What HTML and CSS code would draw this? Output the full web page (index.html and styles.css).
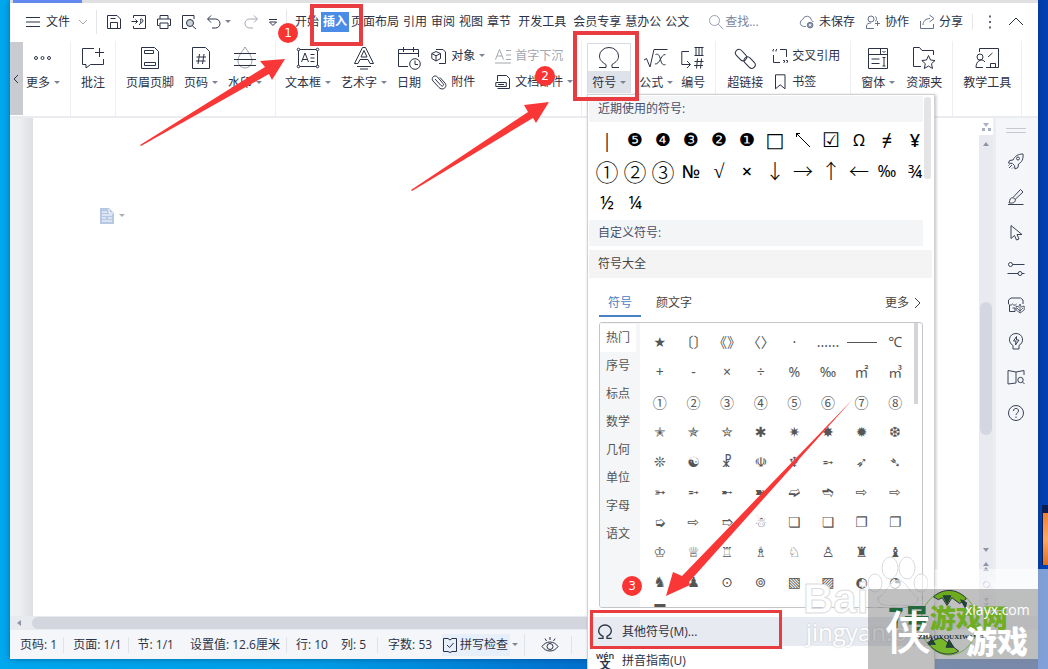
FILE: index.html
```html
<!DOCTYPE html>
<html lang="zh-CN">
<head>
<meta charset="utf-8">
<title>文档 - 插入符号</title>
<link rel="stylesheet" href="styles.css">
</head>
<body>
<svg class="defs" aria-hidden="true">
  <symbol id="i-menu" viewBox="0 0 16 16"><path d="M1 3.5h14M1 8h14M1 12.5h14"/></symbol>
  <symbol id="i-down" viewBox="0 0 10 16"><path d="M1 6l4 4 4-4"/></symbol>
  <symbol id="i-save" viewBox="0 0 16 16"><path d="M1.5 1.500h9.500l3.500 3.500v9.500h-13zM4.500 14.500V8.500h7v6M4.500 4.500h5"/></symbol>
  <symbol id="i-export" viewBox="0 0 16 16"><path d="M2.500 4V1.500h12v13h-12V12M.5 7.500h6M4.500 5.500l2 2-2 2M8 11c2-1 2-4 1.500-6 3-.5 3.500 3.500 0 4"/></symbol>
  <symbol id="i-print" viewBox="0 0 16 16"><path d="M4 5V1.500h8V5M3.500 11.500h-2v-6.500h13v6.500h-2M4 9h8v5.500H4z"/></symbol>
  <symbol id="i-preview" viewBox="0 0 16 16"><path d="M6 14.500H1.500v-13h11.500V5M11.500 12l3.500 3"/><circle cx="9" cy="9" r="3.500" fill="#cbd0da"/></symbol>
  <symbol id="i-undo" viewBox="0 0 16 16"><path d="M5 1.500L1.500 5 5 8.500M2 5h7.500a4.500 4.500 0 0 1 0 9H6"/></symbol>
  <symbol id="i-redo" viewBox="0 0 16 16"><path d="M11 1.500L14.500 5 11 8.500M14 5H6.500a4.500 4.500 0 0 0 0 9H10"/></symbol>
  <symbol id="i-qmore" viewBox="0 0 10 16"><path d="M1 5.500h8M1.500 8h7L5 11.500z"/></symbol>
  <symbol id="i-search" viewBox="0 0 16 16"><circle cx="6.500" cy="6.500" r="5"/><path d="M10.200 10.200l5 4.800"/></symbol>
  <symbol id="i-cloud" viewBox="0 0 18 16"><path d="M8 13H5a4 4 0 0 1-.8-7.800A5 5 0 0 1 14 6a4 4 0 0 1 2 2"/><circle cx="12.500" cy="11.500" r="3.200" fill="#8490a8"/><path d="M11.200 10.200l2.600 2.600M13.800 10.200l-2.600 2.600" stroke="#fff"/></symbol>
  <symbol id="i-people" viewBox="0 0 16 16"><circle cx="6" cy="5" r="3"/><path d="M9 14.500H1.500V12c0-2 2-3 4.500-3M12.500 7v5M10 9.500h5M10 2.500c2 .5 2 4 0 5"/></symbol>
  <symbol id="i-share" viewBox="0 0 16 16"><path d="M1.500 7v7.500h13V10M4 11c0-4 3-6.500 7-6.500M10.500 1l4.500 3.500-4.500 3.500"/></symbol>
  <symbol id="i-dots" viewBox="0 0 6 16"><path d="M3 1.500v2M3 7v2M3 12.500v2" stroke-width="1.500"/></symbol>
  <symbol id="i-up" viewBox="0 0 16 16"><path d="M1 11l7-7 7 7"/></symbol>

  <symbol id="i-more" viewBox="0 0 24 24"><circle cx="5" cy="12" r="1.500"/><circle cx="11.500" cy="12" r="1.500"/><circle cx="18" cy="12" r="1.500"/></symbol>
  <symbol id="i-comment" viewBox="0 0 24 24"><path d="M13 2.500H1.500v16H5V22l4.500-3.500h13V13M18.500 2v9M14 6.500h9"/></symbol>
  <symbol id="i-header" viewBox="0 0 24 24"><path d="M3.500 1.500h13l4 4v17h-17zM6.500 4.500h9v3h-9zM6.500 16.500h11v3h-11z"/></symbol>
  <symbol id="i-pageno" viewBox="0 0 24 24"><path d="M3.500 1.500h13l4 4v17h-17zM10.500 8l-1.500 10M15 8l-1.500 10M7.500 11h9.500M7 15h9.500"/></symbol>
  <symbol id="i-mark" viewBox="0 0 24 24"><path d="M12 1C9 6 5 10 5 15a7 7 0 0 0 14 0C19 10 15 6 12 1z" stroke="#999da8"/><path d="M1 7.500h22M1 13.500h22M1 19.500h22"/></symbol>
  <symbol id="i-textbox" viewBox="0 0 24 24"><path d="M2.500 3.500h19v17h-19zM5.500 16l3.500-9 3.500 9M6.500 13.500h5M14.500 8.500h4M14.500 12h4M14.500 15.500h4"/><g fill="#fff"><circle cx="2.500" cy="3.500" r="1.300"/><circle cx="21.500" cy="3.500" r="1.300"/><circle cx="2.500" cy="20.500" r="1.300"/><circle cx="21.500" cy="20.500" r="1.300"/></g></symbol>
  <symbol id="i-wordart" viewBox="0 0 24 24"><path d="M2.500 17.500L10.500 1.500h3l8 16h-3.500l-2-4H8l-2 4zM9 11h6l-3-6.500zM5 20.500h14M8 23h8"/></symbol>
  <symbol id="i-date" viewBox="0 0 24 24"><path d="M11 20.500H1.500v-17h20V11M1.500 7.500h20M6.500 1v5M16.500 1v5"/><circle cx="18" cy="18" r="5.300"/><path d="M18 14.500V18.500h3"/></symbol>
  <symbol id="i-object" viewBox="0 0 16 16"><path d="M5 1.500h7l2.500 2.500v11.500H8M5 3.500l4.500 2v5L5 13 .8 10.500v-5zM.8 5.500L5 7.800l4.500-2.300M5 7.800V13"/></symbol>
  <symbol id="i-clip" viewBox="0 0 16 16"><path d="M4 5l6 6.500c1.500 1.500 3.500-.5 2-2L6.500 3C3.500 0-.5 4 2 7l6 6.500c4 4 9-1 6-4.500L9 3.500"/></symbol>
  <symbol id="i-drop" viewBox="0 0 16 16"><path d="M.5 11.500L4.500 1.500 8.500 11.500M2 8h5M11 2.500h5M11 7h5M11 11.500h5M0 15h16"/></symbol>
  <symbol id="i-parts" viewBox="0 0 16 16"><path d="M2.500 7V1.500h9l3 3v10h-12M.8 8.500h10.500v4H.8zM3 10.500h6"/></symbol>
  <symbol id="i-omega" viewBox="0 0 24 24"><path d="M2 21.500h7v-3C4.500 16 2.500 13.500 2.500 10a9.500 8.500 0 0 1 19 0c0 3.500-2 6-6.500 8.500v3h7"/></symbol>
  <symbol id="i-formula" viewBox="0 0 24 24"><path d="M0 14l2.500-1.500L6 21 10 3.500h13.500M11.500 8.500c3-1 4 1 5 5s2 6 5 5M21.500 8.500c-3 0-4 3-5.500 5.500s-2.500 4-5 4"/></symbol>
  <symbol id="i-number" viewBox="0 0 24 24"><path d="M8 5.500H.8v13H9M6 15l3.500 3.500L6 22M13.500 1.500h9M13.500 9.500h9M15 1.500v8M18 1.500v8M21 1.500v8M16.500 12.500l-1 10M20.500 12.500l-1 10M13.500 15.500h9M13 19.500h9"/></symbol>
  <symbol id="i-link" viewBox="0 0 24 24"><rect x="-5" y="-3.500" width="13" height="7" rx="3.500" transform="translate(7 8) rotate(47)"/><rect x="-7" y="-3.500" width="13" height="7" rx="3.500" transform="translate(17 17) rotate(47)"/></symbol>
  <symbol id="i-cross" viewBox="0 0 16 16"><path d="M1.500 7v7.500H8M8 1.500h6.500V9M1 3.500V2l1-1M4 3.500V2l1-1M11 12.500h1.500V14l-1 1M14 12.500h1.500V14l-1 1"/></symbol>
  <symbol id="i-book" viewBox="0 0 16 16"><path d="M3.500.8h9.500v14l-4.800-4-4.700 4z"/></symbol>
  <symbol id="i-form" viewBox="0 0 24 24"><path d="M2.500 2.500h19v20h-19zM2.500 8.500h19M14.500 2.500v6M5.500 13h8M5.500 17.500h8M16.500 11.500h3M16.500 20h3M18 11.500V20M16.500 5l1.500 1.500L19.500 5"/></symbol>
  <symbol id="i-folder" viewBox="0 0 24 24"><path d="M9 20.500H1.500v-19h6l2.500 3h11.500V9M16.500 9.500l2 4.500 4.500.5-3.500 3.200 1 4.800-4-2.500-4.200 2.500 1-4.800L9.800 14.500l4.700-.5z"/></symbol>
  <symbol id="i-teach" viewBox="0 0 24 24"><path d="M4.500 6V2.500h19v19H11M1 21.500c0-8 7-9 9-5.500M1 21.500h7M13 11l4.500-4M15.500 21v-3.500h5V21"/><circle cx="5" cy="11" r="3"/></symbol>

  <symbol id="i-rocket" viewBox="0 0 18 18"><path d="M16 2c-5 0-8 2-10 6L2.500 8.500 1.500 11l4 .5 2 2L8 17l3-1.500.5-3.500C15 10 16.500 7 16 2zM2 16l3-3M5 16.500l1-1M1.500 13.500l1-1"/><circle cx="11" cy="6.500" r="1.500"/></symbol>
  <symbol id="i-brush" viewBox="0 0 18 18"><path d="M1 16.500h15.500M2 15c1-1 0-4 2.500-5 3-1 5 2 3 4-1.500 1.500-4 1-5.500 1zM6 9.500l7.500-8 2.500 2.500-8 7.500"/></symbol>
  <symbol id="i-pointer" viewBox="0 0 18 18"><path d="M4 1.500v13l3.500-3 2 4.500 2.500-1-2-4.500h5z"/></symbol>
  <symbol id="i-sliders" viewBox="0 0 18 18"><circle cx="3.500" cy="4.500" r="2"/><path d="M5.500 4.500h12M.5 13.500h11M15 13.500h2.500"/><circle cx="13" cy="13.500" r="2"/></symbol>
  <symbol id="i-shop" viewBox="0 0 18 18"><path d="M8 15.500H2.500V9M4 2h9.500l2.500 2v4M4 2L1.500 4v4c1 1.500 3 1.500 4 0 1 1.500 3 1.500 4 0M5.500 12h2.500v3.500"/><path d="M13 8l1.200 3 3-1v4l-4 3-4-3v-4l2.500 1zM13 11v6M10 12l3 3 3-3" stroke-width=".8"/></symbol>
  <symbol id="i-bulb" viewBox="0 0 18 18"><path d="M6 13.500C0 10 2 1.500 9 1.500s9 8.500 3 12V17H6zM9.500 4.500L6.500 9H9l-.5 4L12 8H9.500z"/></symbol>
  <symbol id="i-read" viewBox="0 0 18 18"><path d="M9 15L1 16V2.500l8 1.500 8-1.500V7M9 4v11"/><circle cx="13.500" cy="12" r="2.700"/><path d="M15.500 14l2 2"/></symbol>
  <symbol id="i-help" viewBox="0 0 18 18"><circle cx="9" cy="9" r="7.500"/><path d="M6.500 7c0-3.500 5-3.500 5 0 0 2-2.500 2-2.500 4M9 12.500v1.500"/></symbol>
  <symbol id="i-doc" viewBox="0 0 14 16"><path d="M0 0h9l5 5v11H0z" fill="#b7c8e4" stroke="none"/><path d="M2 4h5M2 7h10M2 10h4M8 10h4M2 13h10M9 1v4h4" stroke="#fff"/></symbol>
  <symbol id="i-spell" viewBox="0 0 16 16"><path d="M8 3L6 1.500H1.500v13H6l2 1 2-1h4.500v-13H10zM5 8l2.500 2.500L11.500 6"/></symbol>
  <symbol id="i-eye" viewBox="0 0 18 18"><path d="M1 10.500c4-6 12-6 16 0-4 6-12 6-16 0zM9 1v3M4 2.500l1.500 2.500M14 2.500L12.500 5"/><circle cx="9" cy="10.500" r="3"/></symbol>
  <symbol id="i-right" viewBox="0 0 8 16"><path d="M1 3l5 5-5 5"/></symbol>
  <symbol id="i-diag" viewBox="0 0 16 16"><path d="M1 1l14 14M1.500 5V1.500H5"/></symbol>
</svg>

<main class="window">
  <div class="tabstrip"><span class="tabstrip-active"></span></div>

  <nav class="menubar" aria-label="菜单">
    <button class="btn file"><svg class="ic"><use href="#i-menu"/></svg>文件<svg class="ic ic-narrow muted"><use href="#i-down"/></svg></button>
    <div class="quick">
      <button class="btn" aria-label="保存"><svg class="ic"><use href="#i-save"/></svg></button>
      <button class="btn" aria-label="输出为PDF"><svg class="ic"><use href="#i-export"/></svg></button>
      <button class="btn" aria-label="打印"><svg class="ic"><use href="#i-print"/></svg></button>
      <button class="btn" aria-label="打印预览"><svg class="ic"><use href="#i-preview"/></svg></button>
      <button class="btn undo" aria-label="撤销"><svg class="ic"><use href="#i-undo"/></svg><i class="caret"></i></button>
      <button class="btn muted" aria-label="恢复"><svg class="ic"><use href="#i-redo"/></svg></button>
      <button class="btn" aria-label="自定义"><svg class="ic ic-narrow"><use href="#i-qmore"/></svg></button>
    </div>
    <div class="tabs">
      <button class="btn">开始</button>
      <button class="btn current">插入</button>
      <button class="btn">页面布局</button>
      <button class="btn">引用</button>
      <button class="btn">审阅</button>
      <button class="btn">视图</button>
      <button class="btn">章节</button>
      <button class="btn apart">开发工具</button>
      <button class="btn apart">会员专享</button>
      <button class="btn">慧办公</button>
      <button class="btn">公文</button>
    </div>
    <label class="search"><svg class="ic"><use href="#i-search"/></svg><input type="text" placeholder="查找..." aria-label="查找"></label>
    <div class="account">
      <button class="btn"><svg class="ic soft"><use href="#i-cloud"/></svg>未保存</button>
      <button class="btn"><svg class="ic soft"><use href="#i-people"/></svg>协作</button>
      <button class="btn"><svg class="ic soft"><use href="#i-share"/></svg>分享</button>
    </div>
    <div class="fold">
      <button class="btn" aria-label="更多选项"><svg class="ic ic-narrow"><use href="#i-dots"/></svg></button>
      <button class="btn" aria-label="折叠功能区"><svg class="ic"><use href="#i-up"/></svg></button>
    </div>
  </nav>

  <section class="ribbon" aria-label="插入">
    <button class="ribbon-back" aria-label="向左滚动"><svg class="ic ic-narrow"><path d="M8 4L4 8l4 4"/></svg></button>
    <div class="group group-first">
      <button class="tool"><svg><use href="#i-more"/></svg><span>更多<i class="caret"></i></span></button>
    </div>
    <div class="group">
      <button class="tool"><svg><use href="#i-comment"/></svg><span>批注</span></button>
    </div>
    <div class="group group-page">
      <button class="tool"><svg><use href="#i-header"/></svg><span>页眉页脚</span></button>
      <button class="tool"><svg><use href="#i-pageno"/></svg><span>页码<i class="caret"></i></span></button>
      <button class="tool"><svg><use href="#i-mark"/></svg><span>水印<i class="caret"></i></span></button>
    </div>
    <div class="group group-text">
      <button class="tool"><svg><use href="#i-textbox"/></svg><span>文本框<i class="caret"></i></span></button>
      <button class="tool"><svg><use href="#i-wordart"/></svg><span>艺术字<i class="caret"></i></span></button>
      <button class="tool"><svg><use href="#i-date"/></svg><span>日期</span></button>
      <div class="stack">
        <button class="btn"><svg class="ic"><use href="#i-object"/></svg>对象<i class="caret"></i></button>
        <button class="btn"><svg class="ic"><use href="#i-clip"/></svg>附件</button>
      </div>
      <div class="stack">
        <button class="btn muted" disabled><svg class="ic"><use href="#i-drop"/></svg>首字下沉</button>
        <button class="btn"><svg class="ic"><use href="#i-parts"/></svg>文档部件<i class="caret"></i></button>
      </div>
    </div>
    <div class="group group-symbol">
      <button class="tool pressed" aria-expanded="true"><svg><use href="#i-omega"/></svg><span>符号<i class="caret"></i></span></button>
      <button class="tool"><svg><use href="#i-formula"/></svg><span>公式<i class="caret"></i></span></button>
      <button class="tool"><svg><use href="#i-number"/></svg><span>编号</span></button>
    </div>
    <div class="group group-link">
      <button class="tool"><svg><use href="#i-link"/></svg><span>超链接</span></button>
      <div class="stack">
        <button class="btn"><svg class="ic"><use href="#i-cross"/></svg>交叉引用</button>
        <button class="btn"><svg class="ic"><use href="#i-book"/></svg>书签</button>
      </div>
    </div>
    <div class="group">
      <button class="tool"><svg><use href="#i-form"/></svg><span>窗体<i class="caret"></i></span></button>
      <button class="tool"><svg><use href="#i-folder"/></svg><span>资源夹</span></button>
    </div>
    <div class="group">
      <button class="tool"><svg><use href="#i-teach"/></svg><span>教学工具</span></button>
    </div>
  </section>

  <div class="workspace">
    <div class="document">
      <article class="page">
        <button class="btn paste" aria-label="粘贴选项"><svg><use href="#i-doc"/></svg><i class="caret"></i></button>
      </article>
    </div>
    <div class="vscroll" aria-hidden="true">
      <div class="ruler-toggle"><i class="tri down"></i><span class="dotrow"></span></div>
      <i class="tri up"></i>
      <div class="vtrack"><span class="vthumb"></span></div>
      <i class="tri down"></i>
      <div class="double"><i class="tri up"></i><i class="tri up"></i></div>
      <span class="ring"></span>
      <div class="double"><i class="tri down"></i><i class="tri down"></i></div>
    </div>
    <aside class="sidebar" aria-label="任务窗格">
      <span class="grip"></span>
      <button class="btn" aria-label="加速"><svg><use href="#i-rocket"/></svg></button>
      <button class="btn" aria-label="样式"><svg><use href="#i-brush"/></svg></button>
      <button class="btn" aria-label="选择"><svg><use href="#i-pointer"/></svg></button>
      <button class="btn" aria-label="属性"><svg><use href="#i-sliders"/></svg></button>
      <button class="btn" aria-label="素材"><svg><use href="#i-shop"/></svg></button>
      <button class="btn" aria-label="推荐"><svg><use href="#i-bulb"/></svg></button>
      <button class="btn" aria-label="阅读"><svg><use href="#i-read"/></svg></button>
      <button class="btn" aria-label="帮助"><svg><use href="#i-help"/></svg></button>
    </aside>
  </div>
  <div class="hscroll" aria-hidden="true"><i class="tri left"></i><span class="hthumb"></span></div>

  <footer class="status">
    <span class="cell line">页码: 1</span>
    <span class="cell line">页面: 1/1</span>
    <span class="cell">节: 1/1</span>
    <span class="cell line">设置值: 12.6厘米</span>
    <span class="cell row">行: 10</span>
    <span class="cell line column">列: 5</span>
    <span class="cell">字数: 53</span>
    <button class="btn spell"><span><svg class="ic"><use href="#i-spell"/></svg>拼写检查</span><i class="caret"></i></button>
    <button class="btn eye" aria-label="护眼模式"><svg><use href="#i-eye"/></svg></button>
  </footer>
</main>

<section class="popup" aria-label="符号">
  <div class="recent">
    <h2 class="bar short">近期使用的符号:</h2>
    <div class="recent-grid">
      <span class="thin">|</span><span class="solid">❺</span><span class="solid">❹</span><span class="solid">❸</span><span class="solid">❷</span><span class="solid">❶</span><span class="box">□</span><span><svg class="ic"><use href="#i-diag"/></svg></span><span class="check">☑</span><span>Ω</span><span class="bolder">≠</span><span class="bolder">¥</span>
      <span class="ring-num">①</span><span class="ring-num">②</span><span class="ring-num">③</span><span class="bolder">№</span><span class="thin">√</span><span class="bolder">×</span><span class="arrow">↓</span><span class="arrow">→</span><span class="arrow">↑</span><span class="arrow">←</span><span>‰</span><span class="fraction">¾</span>
      <span class="fraction">½</span><span class="fraction">¼</span>
    </div>
    <h2 class="bar short">自定义符号:</h2>
    <i class="recent-scroll"></i>
  </div>
  <h2 class="bar plain">符号大全</h2>
  <div class="switch">
    <button class="btn on">符号</button>
    <button class="btn faces">颜文字</button>
    <button class="btn all">更多<svg class="ic ic-narrow"><use href="#i-right"/></svg></button>
  </div>
  <div class="library">
    <div class="kinds">
      <button class="btn on">热门</button><button class="btn">序号</button><button class="btn">标点</button><button class="btn">数学</button><button class="btn">几何</button><button class="btn">单位</button><button class="btn">字母</button><button class="btn">语文</button>
    </div>
    <div class="glyphs">
      <span>★</span><span>〔〕</span><span>《》</span><span>〈〉</span><span>·</span><span>......</span><span><i class="dash"></i></span><span>℃</span>
      <span>+</span><span>-</span><span>×</span><span>÷</span><span>%</span><span>‰</span><span>㎡</span><span>㎥</span>
      <span class="num">①</span><span class="num">②</span><span class="num">③</span><span class="num">④</span><span class="num">⑤</span><span class="num">⑥</span><span class="num">⑦</span><span class="num">⑧</span>
      <span>✭</span><span>✯</span><span>✮</span><span>✱</span><span>✷</span><span>✸</span><span>✹</span><span>❆</span>
      <span>❊</span><span>☯</span><span>☧</span><span>☫</span><span>♆</span><span>➵</span><span>➶</span><span>➴</span>
      <span>➳</span><span>➵</span><span>➸</span><span>➽</span><span>➫</span><span>➬</span><span>⇨</span><span>⇨</span>
      <span>➭</span><span>⇨</span><span>➱</span><span>☃</span><span>❏</span><span>❏</span><span>❐</span><span>❐</span>
      <span>♔</span><span>♕</span><span>♖</span><span>♗</span><span>♘</span><span>♙</span><span>♜</span><span>♝</span>
      <span>♞</span><span>♟</span><span>⊙</span><span>⊚</span><span>▧</span><span>▨</span><span>◐</span><span>◔</span>
      <span>▀</span>
    </div>
    <i class="library-scroll"></i>
  </div>
  <button class="entry hover"><svg><use href="#i-omega"/></svg>其他符号(M)...</button>
  <button class="entry"><span class="pinyin"><small>wén</small>文</span>拼音指南(U)</button>
</section>

<i class="desk-app"></i>

<div class="marks">
  <svg class="arrows" width="1048" height="669" viewBox="0 0 1048 669" aria-hidden="true">
    <path d="M140 145L265 67L260 61L285 59L272 80L269 74L141 146z"/>
    <path d="M411 190L528 112L524 105L549 102L536 123L533 118L412 191z"/>
    <path d="M853 399L682 576L673 572L666 596L690 585L689 582z"/>
  </svg>
  <i class="frame frame-tab"></i>
  <i class="frame frame-tool"></i>
  <i class="frame frame-entry"></i>
  <b class="step step-1">1</b>
  <b class="step step-2">2</b>
  <b class="step step-3">3</b>
</div>

<div class="stamp">
  <span class="veil"></span>
  <svg class="paw" viewBox="0 0 60 50" aria-hidden="true"><ellipse cx="22" cy="12" rx="8" ry="11"/><ellipse cx="39" cy="12" rx="8" ry="11"/><ellipse cx="7" cy="27" rx="7" ry="9"/><ellipse cx="53" cy="27" rx="7" ry="9"/><path d="M30 24c-8 0-12 14-20 18 0 8 8 8 20 7 12 1 20 1 20-7-8-4-12-18-20-18z"/></svg>
  <span class="baidu">Bai<span class="faint">du经验</span></span>
  <span class="jingyan">jingyan.b</span>
  <div class="badge">
    <svg class="ball" viewBox="0 0 60 70" aria-hidden="true"><ellipse cx="30" cy="35" rx="29" ry="33" fill="none" stroke="#6fa63a"/><path d="M14 8c10-9 24-9 34 2l-7 5-8-6-5 8-5-8-4 2z" fill="#6cab1e"/><path d="M8 55l14-5 18 14C30 70 16 67 8 55z" fill="#77b82a"/><path d="M24 7l8 0-4 8zM42 11l6 3-1 6zM30 52l5 8h-8zM12 51l4 6-7 0z" fill="#174d2c"/></svg>
    <span class="name">7号<em>游戏网</em></span>
    <span class="xia">侠</span>
    <span class="latin">ZHAOYOUXIWANG</span>
    <span class="site">xiayx.com</span>
    <span class="game">游戏</span>
  </div>
</div>
</body>
</html>
```
FILE: styles.css
```css
* { box-sizing: border-box; }

body {
  margin: 0;
  position: relative;
  height: 100vh;
  overflow: hidden;
  padding: 0 10px 10px;
  display: flex;
  background: linear-gradient(90deg, #00a8ee 0%, #009de6 30%, #0560c6 65%, #0340b2 95%);
  font: 12px/16px "Open Sans", "Noto Sans CJK SC", sans-serif;
  color: #2b3245;
}

.defs { position: absolute; width: 0; height: 0; }

svg { fill: none; stroke: currentColor; stroke-width: 1; flex: none; }
i, em { font-style: normal; }

.btn, .tool, .entry, .ribbon-back {
  border: 0;
  padding: 0;
  background: none;
  color: inherit;
  font: inherit;
  white-space: nowrap;
  display: flex;
  align-items: center;
}
.ic { width: 16px; height: 16px; }
.ic-narrow { width: 10px; }
.btn.muted, .muted { color: #a3a7b0; }
.soft { color: #66708a; }
.caret {
  display: inline-block;
  flex: none;
  margin-left: 4px;
  margin-bottom: 1px;
  border: 3px solid transparent;
  border-top-color: #7c8494;
  border-bottom: 0;
}

.window {
  flex: 1;
  min-width: 0;
  display: flex;
  flex-direction: column;
  background: #fff;
  box-shadow: 0 0 6px rgba(0, 40, 90, .5);
}

.tabstrip { height: 3px; background: #e0e0e2; padding-left: 3px; display: flex; }
.tabstrip-active { width: 69px; background: #6388ef; }

/* menu bar */
.menubar { height: 38px; display: flex; align-items: center; padding: 0 14px 0 15px; }
.file { gap: 5px; height: 24px; padding-right: 8px; border-right: 1px solid #e4e6ea; }
.file .ic-narrow { margin-left: 3px; }
.quick { display: flex; align-items: center; gap: 9px; height: 24px; padding: 0 8px 0 9px; border-right: 1px solid #e4e6ea; }
.undo { margin-right: 3px; }
.undo .caret { margin-left: 3px; }
.tabs { display: flex; gap: 4px; margin-left: 8px; }
.tabs .btn { line-height: 20px; }
.tabs .current { background: #4a8ce8; color: #fff; font-weight: 600; padding: 0 2px; margin: 0 -2px; }
.tabs .apart { margin-left: 3px; }
.search { display: flex; align-items: center; gap: 1px; margin-left: 19px; color: #98a0b0; }
.search input { width: 44px; border: 0; padding: 0; background: none; font: inherit; color: inherit; outline: 0; }
.search input::placeholder { color: #7b869c; opacity: 1; }
.account { display: flex; gap: 10px; margin-left: auto; padding-right: 9px; border-right: 1px solid #e4e6ea; }
.account .btn { gap: 4px; }
.fold { display: flex; gap: 13px; padding-left: 12px; }

/* ribbon */
.ribbon { height: 77px; display: flex; border-bottom: 2px solid #ebecef; }
.ribbon-back { width: 13px; margin: 1px 0; background: #cacbd0; }
.group { display: flex; gap: 11px; padding: 0 10px; border-right: 1px solid #eeeff2; }
.group-first { padding: 0 10px 0 3px; }
.group-page { gap: 10px; padding-right: 13px; }
.group-text { gap: 10px; padding: 0 8px 0 9px; }
.group-symbol { gap: 8px; padding-left: 5px; }
.group-link { gap: 9px; padding-left: 11px; }
.tool { flex-direction: column; gap: 3px; padding-top: 5px; height: 52px; }
.tool svg { width: 24px; height: 24px; }
.tool span { display: flex; align-items: center; line-height: 20px; }
.pressed { width: 44px; height: 50px; margin-top: 2px; padding-top: 2px; border: 1px solid #d7dbe4; border-bottom: 0; background: linear-gradient(#fff 27px, #dfe3e9 27px); }
.stack { display: flex; flex-direction: column; gap: 10px; padding-top: 7px; }
.stack .btn { gap: 4px; }
.stack .caret { margin-left: 0; }

/* document area */
.workspace { flex: 1; min-height: 0; display: flex; }
.document { flex: 1; display: flex; padding-left: 23px; background: linear-gradient(90deg, #eff0f2 8px, #dedfe2 23px); }
.page { flex: 1; background: #fff; padding: 89px 67px; }
.paste svg { width: 14px; height: 18px; }
.paste .caret { margin-left: 5px; border-top-color: #a8adb8; }

.tri { width: 0; border: 3px solid transparent; flex: none; }
.tri.up { border-top: 0; border-bottom: 4px solid #8d94a8; }
.tri.down { border-bottom: 0; border-top: 4px solid #8d94a8; }
.tri.left { border-left: 0; border-right: 4px solid #8d94a8; }
.vscroll { width: 14px; display: flex; flex-direction: column; align-items: center; gap: 7px; padding-bottom: 6px; background: #e8eaf0; }
.ruler-toggle { width: 100%; height: 17px; background: #fff; display: flex; flex-direction: column; align-items: center; justify-content: center; gap: 1px; }
.ruler-toggle .tri { border-top-color: #a9b0c6; }
.dotrow { width: 9px; border-top: 3px dotted #a9b0c6; }
.vtrack { flex: 1; width: 12px; display: flex; flex-direction: column; padding-top: 149px; }
.vthumb { height: 133px; border-radius: 6px; background: #d4d7e1; }
.double { display: flex; flex-direction: column; gap: 1px; padding: 3px 0; }
.ring { width: 7px; height: 7px; border: 1px solid #8d94a8; border-radius: 50%; }

.sidebar { width: 45px; padding: 10px 2px 0 0; border-left: 3px solid #eceef2; background: #f5f6f9; display: flex; flex-direction: column; align-items: center; gap: 18px; color: #3a4256; }
.sidebar svg { width: 18px; height: 18px; }
.grip { width: 20px; height: 5px; margin-bottom: 1px; border: 1px solid #c5c8cf; border-width: 1px 0; }

.hscroll { height: 14px; display: flex; align-items: center; gap: 11px; padding: 1px 58px 1px 7px; background: #e8eaf0; }
.hthumb { flex: 1; height: 12px; border-radius: 6px; background: #d3d6df; }

.status { height: 29px; display: flex; align-items: center; padding-left: 10px; background: #f4f6f9; }
.cell { padding-right: 6px; margin-right: 9px; white-space: nowrap; border-right: 1px solid transparent; }
.cell.line { border-right-color: #e0e3e8; }
.cell.row { margin-right: 6px; }
.cell.column { padding-right: 11px; margin-right: 10px; }
.spell { margin-left: -6px; padding-right: 6px; border-right: 1px solid #e0e3e8; }
.spell span { display: flex; gap: 2px; align-items: center; padding: 3px 2px 3px 0; background: #e6effa; }
.spell .caret { margin-left: 2px; }
.eye { margin-left: 16px; padding-right: 12px; border-right: 1px solid #e0e3e8; }
.eye svg { width: 18px; height: 18px; }

/* symbol popup */
.popup {
  position: absolute;
  left: 587px;
  top: 94px;
  width: 348px;
  padding: 1px 1px 4px;
  border: 1px solid #cfd1d5;
  background: #fff;
  box-shadow: 1px 1px 3px rgba(0, 0, 0, .25);
}
.bar { margin: 0; padding: 5px 9px; font: inherit; background: #f3f5f7; color: #46506a; }
.short { margin-right: 10px; }
.plain { margin: 4px 1px 0 0; padding: 6px 9px; background: #f4f4f5; color: #444; }
.recent { position: relative; }
.recent-grid { display: grid; grid-template-columns: repeat(12, 28px); grid-auto-rows: 31px; padding: 2px 0 3px 4px; color: #000; font-size: 16px; font-family: "Noto Sans", "Noto Sans CJK SC", "DejaVu Sans", sans-serif; }
.recent-grid span, .glyphs span { display: flex; align-items: center; justify-content: center; white-space: nowrap; }
.recent-grid .solid { font: 18px/20px "DejaVu Sans", sans-serif; }
.recent-grid .bolder { font: 500 18px/20px "Noto Sans", "Noto Sans CJK SC", sans-serif; }
.recent-grid .fraction { font-size: 18px; }
.recent-grid .check { font: 20px/20px "DejaVu Sans", sans-serif; }
.recent-grid .ring-num { font: 300 23px/24px "Noto Sans CJK SC", sans-serif; }
.recent-grid .thin { font: 20px/22px "Liberation Serif", serif; }
.recent-grid .arrow { font: 300 20px/22px "Noto Sans CJK SC", sans-serif; }
.recent-grid .box { font: 20px/20px "DejaVu Sans", sans-serif; }
.recent-scroll { position: absolute; right: 2px; top: 1px; width: 7px; height: 82px; border-radius: 3px; background: #e4e4e6; }

.switch { display: flex; padding: 15px 10px 0; color: #444; }
.switch .btn { padding: 0 9px 2px; border-bottom: 2px solid transparent; line-height: 20px; }
.switch .on { border-color: #4a80c4; color: #4a80c4; }
.switch .faces { margin-left: 6px; }
.switch .all { margin-left: auto; padding-right: 0; gap: 4px; }

.library { position: relative; display: flex; height: 286px; overflow: hidden; margin: 5px 10px 9px; border: 1px solid #c3c5c9; border-radius: 3px; color: #555; }
.kinds { width: 40px; padding-top: 1px; background: #f4f6f8; }
.kinds .btn { height: 28px; width: 36px; justify-content: center; }
.kinds .on { background: #fff; }
.glyphs { flex: 1; display: grid; grid-template-columns: repeat(8, 1fr); grid-auto-rows: 30px; padding: 4px 10px 0 3px; font: 14px/20px "Noto Sans", "DejaVu Sans", "Noto Sans CJK SC", sans-serif; }
.glyphs .num { font-family: "Noto Sans CJK SC", sans-serif; }
.dash { width: 30px; border-top: 1px solid #555; }
.library-scroll { position: absolute; right: 4px; top: 0; width: 4px; height: 81px; background: #d5d5d7; }

.entry { width: 100%; height: 29px; padding-left: 8px; gap: 9px; }
.entry.hover { background: #e7eaf0; }
.entry svg { width: 16px; height: 16px; stroke-width: 2; }
.pinyin { width: 16px; display: flex; flex-direction: column; align-items: center; font-size: 11px; line-height: 9px; font-weight: 600; }
.pinyin small { font-size: 9px; line-height: 8px; }

.desk-app { position: absolute; right: 0; top: 505px; width: 6px; height: 60px; border: 1px solid #0a1c50; border-width: 8px 0 0 1px; background: linear-gradient(#f08030, #ffa860 50%, #e07020); }

/* tutorial marks */
.marks, .stamp { position: absolute; left: 0; top: 0; width: 100%; height: 100%; pointer-events: none; }
.arrows { display: block; fill: #fa3737; stroke: none; }
.frame { position: absolute; border: 4px solid #e83c40; }
.frame-tab { left: 310px; top: 4px; width: 53px; height: 42px; }
.frame-tool { left: 573px; top: 31px; width: 66px; height: 70px; }
.frame-entry { left: 590px; top: 610px; width: 192px; height: 39px; border-width: 3px; }
.step { position: absolute; width: 20px; height: 20px; border-radius: 50%; background: #fa3333; color: #fff; font: 12px/20px "DejaVu Sans", sans-serif; text-align: center; }
.step-1 { left: 278px; top: 23px; }
.step-2 { left: 535px; top: 66px; }
.step-3 { left: 622px; top: 576px; }

/* watermarks */
.stamp span, .stamp svg { position: absolute; white-space: nowrap; }
.veil { left: 935px; right: 0; top: 569px; bottom: 0; background: rgba(255, 255, 255, .5); }
.paw { left: 868px; top: 556px; width: 60px; height: 50px; fill: rgba(255, 255, 255, .6); stroke: #dadbde; }
.baidu { left: 803px; top: 576px; font: 700 42px/46px "Liberation Sans", "Noto Sans CJK SC", sans-serif; color: #fff; -webkit-text-stroke: 1px #dcdde0; }
.stamp .faint { position: static; color: rgba(255, 255, 255, .4); -webkit-text-stroke: 0; }
.jingyan { left: 806px; top: 618px; font: 24px/28px "Open Sans", sans-serif; color: #fff; text-shadow: 0 0 2px #b9bcc4; }
.badge { position: absolute; left: 868px; top: 589px; width: 170px; height: 80px; background: rgba(110, 110, 110, .43); }
.ball { left: 51px; top: 0; width: 60px; height: 68px; }
.name { left: 20px; top: 14px; font: 900 26px/28px "Noto Sans CJK SC", sans-serif; color: #23683c; }
.name em { color: #6fae22; }
.latin { left: 50px; top: 44px; font: 700 7px/8px "Liberation Serif", serif; color: #233; }
.xia { left: 17px; top: 16px; font: 500 46px/48px "Noto Sans CJK SC", sans-serif; color: #fff; }
.site { left: 97px; top: 12px; font: 14px/18px "Open Sans", sans-serif; color: #fff; }
.game { left: 98px; top: 34px; font: 900 31px/34px "Noto Sans CJK SC", sans-serif; color: #fff; }
```
